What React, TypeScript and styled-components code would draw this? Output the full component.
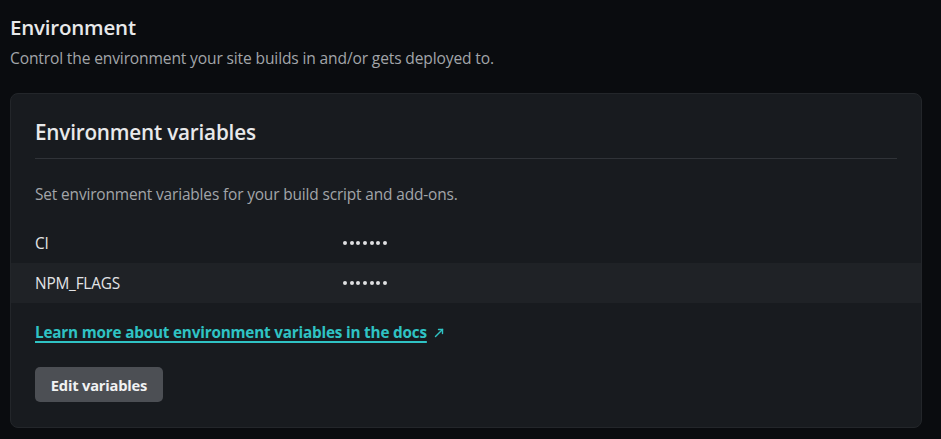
import React from "react";
import styled, { createGlobalStyle } from "styled-components";

const Global = createGlobalStyle`
  html, body {
    margin: 0;
    padding: 0;
    background: #0a0c0f;
  }
  body {
    font-family: "Open Sans", "Noto Sans", "Liberation Sans", sans-serif;
    -webkit-font-smoothing: antialiased;
  }
`;

const Page = styled.main`
  padding: 13px 19px 11px 10px;
  display: flex;
  flex-direction: column;
`;

const Title = styled.h1`
  margin: 0;
  font-size: 20.5px;
  line-height: 28px;
  font-weight: 600;
  color: #e8e9ea;
  letter-spacing: -0.2px;
`;

const Subtitle = styled.p`
  margin: 6px 0 0;
  font-size: 15.6px;
  line-height: 22px;
  color: #a2a5a9;
  letter-spacing: -0.15px;
`;

const Card = styled.section`
  margin-top: 24px;
  background: #181b1f;
  border: 1px solid #23262a;
  border-radius: 8px;
  padding: 0 0 25px;
  display: flex;
  flex-direction: column;
`;

const CardHeader = styled.div`
  margin: 0 24px;
  padding: 25px 0 13px;
  border-bottom: 1px solid #303338;
`;

const CardTitle = styled.h2`
  margin: 0;
  font-size: 20.7px;
  line-height: 26px;
  font-weight: 600;
  color: #e8e9ea;
  letter-spacing: -0.2px;
`;

const Description = styled.p`
  margin: 24px 24px 18px;
  font-size: 15.45px;
  line-height: 22px;
  color: #a2a5a9;
  letter-spacing: -0.15px;
`;

const VarList = styled.dl`
  margin: 0;
  display: flex;
  flex-direction: column;
`;

const VarRow = styled.div<{ $alt?: boolean }>`
  display: grid;
  grid-template-columns: 308px 1fr;
  align-items: center;
  height: 40px;
  padding: 0 24px;
  background: ${(p) => (p.$alt ? "#1f2226" : "transparent")};
`;

const VarKey = styled.dt`
  font-size: 15.4px;
  color: #e3e4e6;
  letter-spacing: -0.2px;
`;

const VarValue = styled.dd`
  margin: 0;
  display: flex;
  gap: 2.67px;
`;

const Dot = styled.span`
  width: 4px;
  height: 4px;
  border-radius: 50%;
  background: #dfe0e2;
`;

const LinkRow = styled.div`
  margin: 18px 24px 0;
  display: flex;
  align-items: center;
  gap: 7px;
  line-height: 22px;
`;

const DocLink = styled.a`
  font-size: 15.3px;
  font-weight: 700;
  color: #2fc3c4;
  text-decoration: underline;
  text-underline-offset: 3px;
  text-decoration-thickness: 1.5px;
  letter-spacing: -0.2px;
`;

const ArrowIcon = styled.svg`
  width: 10px;
  height: 10px;
  color: #2fc3c4;
  margin-top: 1px;
`;

const EditButton = styled.button`
  margin: 24px 24px 0;
  align-self: flex-start;
  width: 128px;
  height: 35px;
  border: none;
  border-radius: 5px;
  background: #4c4f54;
  color: #f1f2f3;
  font-family: inherit;
  font-size: 14.7px;
  font-weight: 700;
  letter-spacing: -0.2px;
  cursor: pointer;
`;

const vars = [
  { key: "CI", alt: false },
  { key: "NPM_FLAGS", alt: true },
];

export default function App() {
  return (
    <>
      <Global />
      <Page>
        <Title>Environment</Title>
        <Subtitle>Control the environment your site builds in and/or gets deployed to.</Subtitle>
        <Card>
          <CardHeader>
            <CardTitle>Environment variables</CardTitle>
          </CardHeader>
          <Description>Set environment variables for your build script and add-ons.</Description>
          <VarList>
            {vars.map((v) => (
              <VarRow key={v.key} $alt={v.alt}>
                <VarKey>{v.key}</VarKey>
                <VarValue>
                  {Array.from({ length: 7 }).map((_, i) => (
                    <Dot key={i} />
                  ))}
                </VarValue>
              </VarRow>
            ))}
          </VarList>
          <LinkRow>
            <DocLink href="#">Learn more about environment variables in the docs</DocLink>
            <ArrowIcon viewBox="0 0 10 10" fill="none" stroke="currentColor" strokeWidth="1.4" strokeLinecap="round">
              <path d="M1.5 8.5 L8.5 1.5" />
              <path d="M4.5 1.5 H8.5 V5.5" />
            </ArrowIcon>
          </LinkRow>
          <EditButton>Edit variables</EditButton>
        </Card>
      </Page>
    </>
  );
}
